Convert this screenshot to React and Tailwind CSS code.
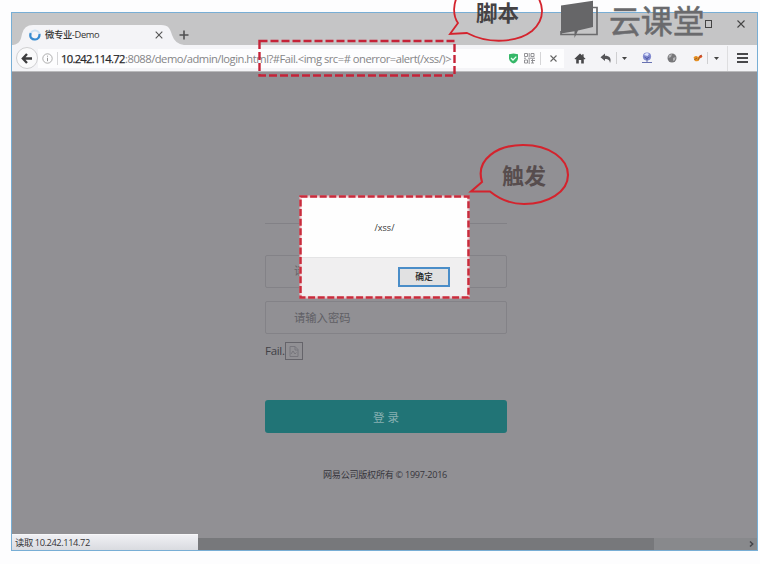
import React from "react";

const ui = "font-['Open_Sans','Noto_Sans_CJK_SC',sans-serif]";

function Tab() {
  return (
    <div className="relative ml-[10px] mt-[12px] flex h-[20px] w-[154px] items-center">
      <svg className="absolute -left-[9px] top-0" width="176" height="20" viewBox="0 0 176 20">
        <path d="M0 20C7 19 8 14 9 9Q11 0 20 0H148C156 0 157 4 159 10Q162 19 171 20Z" fill="#f4f4f7" />
      </svg>
      <svg className="relative ml-[7px]" width="12" height="12" viewBox="0 0 12 12" fill="none">
        <circle cx="6" cy="6" r="4.5" stroke="#cde2f3" strokeWidth="2" />
        <path d="M1.7 4.2C.2 8.5 3 10.5 6 10.5C9 10.5 10.8 8 10.4 5" stroke="#378bd0" strokeWidth="2.2" />
      </svg>
      <span className="relative ml-[4px] w-[106px] whitespace-nowrap text-[9.3px] font-medium leading-[16px] tracking-[-0.35px] text-[#333]">微专业-Demo</span>
      <svg className="relative ml-[4px]" width="8" height="8" viewBox="0 0 8 8" stroke="#555" strokeWidth="1.1">
        <path d="M.7.7l6.6 6.6M7.3.7L.7 7.3" />
      </svg>
    </div>
  );
}

function TabStrip() {
  return (
    <div className="flex h-[32px] bg-[#c5c5c6]">
      <Tab />
      <svg className="ml-[3px] mt-[17px]" width="10" height="10" viewBox="0 0 10 10" stroke="#505052" strokeWidth="1.6">
        <path d="M5 .5v9M.5 5h9" />
      </svg>
      <div className="ml-auto flex items-start">
        <div className="mr-[25px] mt-[7px] h-[8px] w-[7px] border border-[#444]" />
        <svg className="mr-[12px] mt-[7px]" width="8" height="8" viewBox="0 0 8 8" stroke="#444" strokeWidth="1.1">
          <path d="M.5.5l7 7M7.5.5l-7 7" />
        </svg>
      </div>
    </div>
  );
}

function Toolbar() {
  return (
    <div className="flex h-[27px] items-center border-b border-[#b9b9bb] bg-[#f4f4f7]">
      <div className="ml-[4px] flex h-[22px] w-[22px] shrink-0 items-center justify-center rounded-full border border-[#d0d0d2] bg-[#fafafb]">
        <svg width="12" height="11" viewBox="0 0 12 11" fill="none" stroke="#3c3c3e" strokeWidth="2.3">
          <path d="M11 5.5H2.5M6 1L1.8 5.5L6 10" />
        </svg>
      </div>
      <div className="flex h-[19px] w-[526px] shrink-0 items-center bg-[#fdfdfe]">
        <svg className="ml-[4px] shrink-0" width="11" height="11" viewBox="0 0 11 11" fill="none" stroke="#999">
          <circle cx="5.5" cy="5.5" r="4.7" strokeWidth=".8" />
          <path d="M5.5 4.8v3.4M5.5 2.7v1" />
        </svg>
        <div className="ml-[4px] h-[13px] w-px bg-[#d5d5d7]" />
        <div className="ml-[3px] flex w-[446px] shrink-0 whitespace-pre pt-px text-[11.2px] leading-[18px] text-[#858587]">
          <span className="w-[64px] tracking-[-0.7px] text-[#29292b] [-webkit-text-stroke:0.25px_#29292b]">10.242.114.72</span>
          <span className="tracking-[-0.48px]">:8088/demo/admin/login.html?#Fail.&lt;img src=# onerror=alert(/xss/)&gt;</span>
        </div>
        <svg className="ml-px shrink-0" width="11" height="11" viewBox="0 0 11 11">
          <path d="M1 1.3L5.5.4L10 1.3V5.5Q9.4 9 5.5 10.6Q1.6 9 1 5.5Z" fill="#35b768" />
          <path d="M3 5L5 7L8.3 3.6" fill="none" stroke="#e9fff2" strokeWidth="1.3" />
        </svg>
        <svg className="ml-[5px] shrink-0" width="11" height="11" viewBox="0 0 11 11" fill="none" stroke="#88888c">
          <path d="M.5.5h3v3h-3zM7 .5h3v3h-3zM.5 7h3v3h-3zM5.2 0v4M4 5.2h7M0 5.2h2M5.2 6v5M7 7.5h4M7 10h3M8.5 6v4" strokeWidth=".9" />
        </svg>
        <div className="ml-[5px] h-[13px] w-px bg-[#d5d5d7]" />
        <svg className="ml-[9px] shrink-0" width="7" height="7" viewBox="0 0 7 7" stroke="#666" strokeWidth="1.1">
          <path d="M.5.5l6 6M6.5.5l-6 6" />
        </svg>
      </div>
      <svg className="ml-[10px] shrink-0" width="12" height="11" viewBox="0 0 12 11" fill="#48484a">
        <path d="M6 .4L.5 5.8L1.3 6.5L2.2 5.8V10.5H4.8V7H7.2V10.5H9.8V5.8L10.7 6.5L11.5 5.8L9.6 3.9V1.2H8.2V2.6Z" />
      </svg>
      <svg className="ml-[14px] shrink-0" width="12" height="11" viewBox="0 0 12 11" fill="#555558">
        <path d="M.5 4.2L5 .6V2.8C9.5 2.8 11.8 5.2 10 10.3C9.8 7 8.2 5.9 5 5.9V8Z" />
      </svg>
      <div className="ml-[4px] h-[12px] w-px bg-[#cfcfd1]" />
      <Caret className="ml-[5px]" />
      <svg className="ml-[14px] shrink-0" width="12" height="12" viewBox="0 0 11 12">
        <circle cx="5.5" cy="4.5" r="4.1" fill="#8189cf" />
        <path d="M2.5 3Q5-.5 7.5 2L6 4Z" fill="#dfe6ff" />
        <path d="M3 5Q5 8 8 5M5.5 6v4M.5 10.5h10" stroke="#4450a0" fill="none" strokeWidth=".8" />
      </svg>
      <svg className="ml-[14px] shrink-0" width="10" height="10" viewBox="0 0 10 10">
        <circle cx="5" cy="5" r="4.5" fill="#77777a" />
        <path d="M2 2.2L5 1L4 4L1.5 5ZM6 5L8.5 4L8 7L6 8Z" fill="#b4b4b7" />
      </svg>
      <svg className="ml-[16px] shrink-0" width="10" height="9" viewBox="0 0 10 9">
        <path d="M.5 3.5Q3 1 5 3L8 1L9.7 2.5L7 4.5Q6 8 2 7Z" fill="#e79124" />
        <path d="M1 6l3-2M5 6l2-4M7 2l2-1" stroke="#754522" strokeWidth=".7" />
        <circle cx="7.6" cy="2.5" r="1.3" fill="#d4452d" />
      </svg>
      <div className="ml-[4px] h-[12px] w-px bg-[#cfcfd1]" />
      <Caret className="ml-[6px]" />
      <div className="ml-[8px] h-[25px] w-px bg-[#dedee0]" />
      <div className="ml-[9px] flex w-[11px] flex-col gap-[2px]">
        <div className="h-[2px] bg-[#48484a]" />
        <div className="h-[2px] bg-[#48484a]" />
        <div className="h-[2px] bg-[#48484a]" />
      </div>
    </div>
  );
}

function Caret({ className }) {
  return (
    <svg className={className + " shrink-0"} width="5" height="3" viewBox="0 0 5 3">
      <path d="M0 0h5L2.5 3Z" fill="#444" />
    </svg>
  );
}

function LoginPage() {
  return (
    <div className="flex h-[478px] flex-col bg-[#919094]">
      <div className="ml-[253px] flex w-[242px] flex-col">
        <div className="mt-[151px] h-px bg-[#828186]" />
        <div className="mt-[31px] flex h-[33px] items-center rounded-[2px] border border-[#838287] pl-[28px] text-[11px] text-[#66656b]">请输入用户名</div>
        <div className="mt-[13px] flex h-[33px] items-center rounded-[2px] border border-[#838287] pl-[28px] pt-[2px] text-[11.3px] text-[#605f65]">请输入密码</div>
        <div className="mt-[7px] flex h-[20px] items-center text-[11.5px] text-[#414046]">
          <span className="w-[20px] leading-[18px] tracking-[-0.3px]">Fail.</span>
          <div className="flex h-[18px] w-[18px] items-center justify-center border border-[#65646a]">
            <svg width="10" height="11" viewBox="0 0 10 11" fill="none" stroke="#77767c">
              <path d="M1 .5H6L9 3.5V10.5H1ZM6 .5V4H9M2 8L4 5L6 8L7.5 6.5" />
            </svg>
          </div>
        </div>
        <div className="mt-[39px] flex h-[33px] items-center justify-center rounded-[3px] bg-[#217476] pt-[2px] text-[11.5px] text-[#88b0b2]">登 录</div>
        <div className="mt-[34px] whitespace-nowrap pr-[2px] text-center text-[9.1px] leading-[16px] tracking-[-0.28px] text-[#37363c]">网易公司版权所有 © 1997-2016</div>
      </div>
      <div className="mt-auto flex items-end">
        <div className="flex h-[16px] w-[186px] items-center border-t border-[#f7f7f9] bg-gradient-to-b from-[#f0f0f4] to-[#d9dbe0] pl-[3px] text-[9.3px] leading-[14px] tracking-[-0.42px] text-[#353539]">读取 10.242.114.72</div>
        <div className="flex h-[12px] flex-1 items-center bg-[#88898c]">
          <div className="h-full w-[456px] bg-[#77787b]" />
          <svg className="ml-auto mr-[3px]" width="5" height="6" viewBox="0 0 5 6" fill="none" stroke="#444449" strokeWidth="1.5">
            <path d="M1 .5L3.7 3L1 5.5" />
          </svg>
        </div>
      </div>
    </div>
  );
}

function AlertDialog() {
  return (
    <div className="absolute left-[299px] top-[195px] h-[104px] w-[171px]">
      <div className="m-[2px] flex h-[100px] w-[167px] flex-col">
        <div className="flex h-[60px] items-center justify-center bg-[#fefefe] pt-[2px] text-[9px] text-[#333]">/xss/</div>
        <div className="flex flex-1 justify-end border-t border-[#e4e4e5] bg-[#f0eff0] pr-[18px] pt-[9px]">
          <div className="flex h-[20px] w-[52px] items-center justify-center border-2 border-[#4a8dc8] bg-[#e1e1e2] text-[8.8px] font-medium leading-none text-[#222]">确定</div>
        </div>
      </div>
      <svg className="absolute left-0 top-0" width="171" height="104" fill="none">
        <rect x="1.5" y="1.5" width="168" height="101" stroke="#f0c8ce" strokeWidth="2" />
        <rect x="1.5" y="1.5" width="168" height="101" stroke="#c92c3d" strokeWidth="2.5" strokeDasharray="7 2.6" />
      </svg>
    </div>
  );
}

function Annotations() {
  return (
    <>
      <svg className="absolute left-0 top-0" width="760" height="564" fill="none" stroke="#d4232d" strokeWidth="2.1">
        <rect x="259.5" y="41" width="195" height="34.5" stroke="#c52338" strokeWidth="2.4" strokeDasharray="8 3" />
        <path d="M460 -8C452 3 453 16 458 23L450 34L467 33C490 45 518 42 532 31C547 18 543 2 534 -8" strokeWidth="1.8" />
        <path d="M482 182C475 159 498 145 523 145C550 145 568 159 568 175C568 192 548 204 524 204C509 204 498 198 490 191.5H471Z" />
      </svg>
      <div className="absolute left-[476px] top-0 whitespace-nowrap text-[21.5px] font-bold leading-[26px] text-[#454244]">脚本</div>
      <div className="absolute left-[502px] top-[161px] whitespace-nowrap text-[22px] font-bold leading-[28px] text-[#574d4e]">触发</div>
      <svg className="absolute left-[559px] top-0" width="40" height="40" viewBox="0 0 40 40">
        <path d="M34 7.5H38V34.5H2V31" fill="none" stroke="#6b6b6d" strokeWidth="1.7" />
        <path d="M2 5.5L34 .7V27L19 30.5L15.5 38V31.3L2 33.5Z" fill="#666668" />
      </svg>
      <div className="absolute left-[609px] top-0 whitespace-nowrap text-[32px] leading-[42px] tracking-[-0.3px] text-[#6a6a6d] [-webkit-text-stroke:0.5px_#6a6a6d]">云课堂</div>
    </>
  );
}

export default function App() {
  return (
    <div className={"relative h-[564px] w-[760px] overflow-hidden bg-[#fdfdfe] pl-[11px] pt-[12px] " + ui}>
      <div className="h-[539px] w-[747px] border border-[#78aed5]">
        <TabStrip />
        <Toolbar />
        <LoginPage />
      </div>
      <AlertDialog />
      <Annotations />
    </div>
  );
}
